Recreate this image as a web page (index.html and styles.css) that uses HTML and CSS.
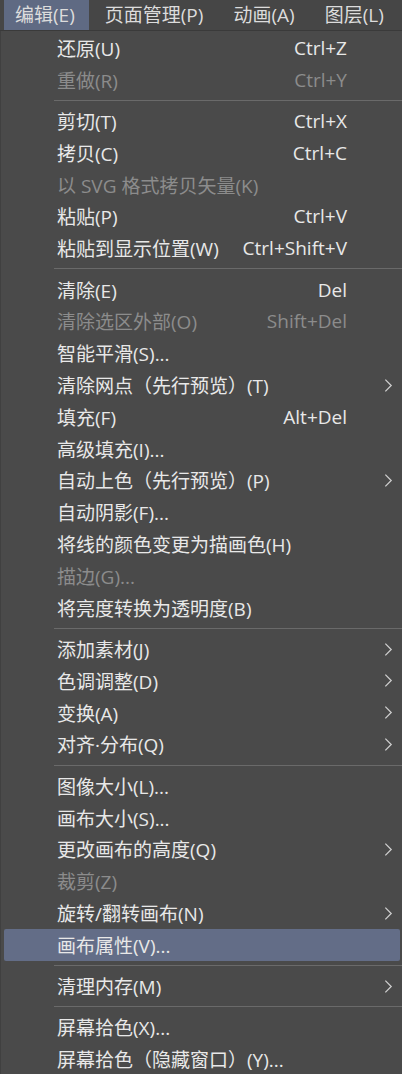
FILE: index.html
```html
<!DOCTYPE html>
<html lang="zh-CN">
<head>
  <meta charset="UTF-8" />
  <meta name="viewport" content="width=device-width, initial-scale=1.0"/>
  <title>编辑菜单</title>
  <link rel="stylesheet" href="styles.css">
</head>
<body>
  <header class="menubar">
    <span class="bar-item active">编辑(E)</span>
    <span class="bar-item">页面管理(P)</span>
    <span class="bar-item">动画(A)</span>
    <span class="bar-item">图层(L)</span>
  </header>

  <ul class="menu">
    <li class="item"><span class="label">还原(U)</span><span class="key">Ctrl+Z</span><span class="sub"></span></li>
    <li class="item disabled"><span class="label">重做(R)</span><span class="key">Ctrl+Y</span><span class="sub"></span></li>
    <li class="sep"></li>
    <li class="item"><span class="label">剪切(T)</span><span class="key">Ctrl+X</span><span class="sub"></span></li>
    <li class="item"><span class="label">拷贝(C)</span><span class="key">Ctrl+C</span><span class="sub"></span></li>
    <li class="item disabled"><span class="label">以 SVG 格式拷贝矢量(K)</span><span class="key"></span><span class="sub"></span></li>
    <li class="item"><span class="label">粘贴(P)</span><span class="key">Ctrl+V</span><span class="sub"></span></li>
    <li class="item"><span class="label">粘贴到显示位置(W)</span><span class="key">Ctrl+Shift+V</span><span class="sub"></span></li>
    <li class="sep"></li>
    <li class="item"><span class="label">清除(E)</span><span class="key">Del</span><span class="sub"></span></li>
    <li class="item disabled"><span class="label">清除选区外部(O)</span><span class="key">Shift+Del</span><span class="sub"></span></li>
    <li class="item"><span class="label">智能平滑(S)...</span><span class="key"></span><span class="sub"></span></li>
    <li class="item"><span class="label">清除网点（先行预览）(T)</span><span class="key"></span><span class="sub"><svg viewBox="0 0 10 16"><path d="M1.5 1.5 L8 8 L1.5 14.5"/></svg></span></li>
    <li class="item"><span class="label">填充(F)</span><span class="key">Alt+Del</span><span class="sub"></span></li>
    <li class="item"><span class="label">高级填充(I)...</span><span class="key"></span><span class="sub"></span></li>
    <li class="item"><span class="label">自动上色（先行预览）(P)</span><span class="key"></span><span class="sub"><svg viewBox="0 0 10 16"><path d="M1.5 1.5 L8 8 L1.5 14.5"/></svg></span></li>
    <li class="item"><span class="label">自动阴影(F)...</span><span class="key"></span><span class="sub"></span></li>
    <li class="item"><span class="label">将线的颜色变更为描画色(H)</span><span class="key"></span><span class="sub"></span></li>
    <li class="item disabled"><span class="label">描边(G)...</span><span class="key"></span><span class="sub"></span></li>
    <li class="item"><span class="label">将亮度转换为透明度(B)</span><span class="key"></span><span class="sub"></span></li>
    <li class="sep"></li>
    <li class="item"><span class="label">添加素材(J)</span><span class="key"></span><span class="sub"><svg viewBox="0 0 10 16"><path d="M1.5 1.5 L8 8 L1.5 14.5"/></svg></span></li>
    <li class="item"><span class="label">色调调整(D)</span><span class="key"></span><span class="sub"><svg viewBox="0 0 10 16"><path d="M1.5 1.5 L8 8 L1.5 14.5"/></svg></span></li>
    <li class="item"><span class="label">变换(A)</span><span class="key"></span><span class="sub"><svg viewBox="0 0 10 16"><path d="M1.5 1.5 L8 8 L1.5 14.5"/></svg></span></li>
    <li class="item"><span class="label">对齐·分布(Q)</span><span class="key"></span><span class="sub"><svg viewBox="0 0 10 16"><path d="M1.5 1.5 L8 8 L1.5 14.5"/></svg></span></li>
    <li class="sep"></li>
    <li class="item"><span class="label">图像大小(L)...</span><span class="key"></span><span class="sub"></span></li>
    <li class="item"><span class="label">画布大小(S)...</span><span class="key"></span><span class="sub"></span></li>
    <li class="item"><span class="label">更改画布的高度(Q)</span><span class="key"></span><span class="sub"><svg viewBox="0 0 10 16"><path d="M1.5 1.5 L8 8 L1.5 14.5"/></svg></span></li>
    <li class="item disabled"><span class="label">裁剪(Z)</span><span class="key"></span><span class="sub"></span></li>
    <li class="item"><span class="label">旋转/翻转画布(N)</span><span class="key"></span><span class="sub"><svg viewBox="0 0 10 16"><path d="M1.5 1.5 L8 8 L1.5 14.5"/></svg></span></li>
    <li class="item hover"><span class="label">画布属性(V)...</span><span class="key"></span><span class="sub"></span></li>
    <li class="sep"></li>
    <li class="item"><span class="label">清理内存(M)</span><span class="key"></span><span class="sub"><svg viewBox="0 0 10 16"><path d="M1.5 1.5 L8 8 L1.5 14.5"/></svg></span></li>
    <li class="sep"></li>
    <li class="item"><span class="label">屏幕拾色(X)...</span><span class="key"></span><span class="sub"></span></li>
    <li class="item"><span class="label">屏幕拾色（隐藏窗口）(Y)...</span><span class="key"></span><span class="sub"></span></li>
  </ul>
</body>
</html>
```

FILE: styles.css
```css
:root {
  --bar-bg: #464646;
  --menu-bg: #4a4a4a;
  --text: #e8e8e8;
  --text-off: #8c8c8c;
  --select: #636d87;
  --line: #6a6a6a;
}

body {
  margin: 0;
  padding: 0;
  background: var(--menu-bg);
  color: var(--text);
  font-family: "Open Sans", "Noto Sans CJK SC", sans-serif;
  font-size: 19px;
  overflow: hidden;
}

.menubar {
  display: flex;
  height: 30px;
  background: var(--bar-bg);
  border-bottom: 1px solid #3a3a3a;
  padding-left: 4px;
  overflow: hidden;
}

.bar-item {
  flex-shrink: 0;
  display: flex;
  align-items: center;
  padding: 0 14px 2px 11px;
  margin-right: 5px;
  color: #dcdcdc;
  white-space: nowrap;
}

.bar-item.active {
  background: #5f6a83;
}

.menu {
  list-style: none;
  margin: 0;
  padding: 1px 0 0;
  border-left: 1px solid #404040;
}

.item {
  display: flex;
  align-items: center;
  height: 31.82px;
  padding-left: 56px;
  white-space: nowrap;
}

.item.disabled {
  color: var(--text-off);
}

.item.hover {
  background: var(--select);
  margin: 0 2px 0 3px;
  padding-left: 53px;
  border-radius: 2px;
}

.label {
  flex: 1;
}

.key {
  text-align: right;
}

.sub {
  width: 55px;
  display: flex;
  align-items: center;
}

.sub svg {
  width: 9px;
  height: 15px;
  margin-left: 37px;
  fill: none;
  stroke: #cfcfcf;
  stroke-width: 1.4;
}

.sep {
  height: 9.5px;
  display: flex;
  align-items: center;
  padding-left: 53px;
}

.sep::after {
  content: "";
  flex: 1;
  height: 1px;
  background: var(--line);
}
```
